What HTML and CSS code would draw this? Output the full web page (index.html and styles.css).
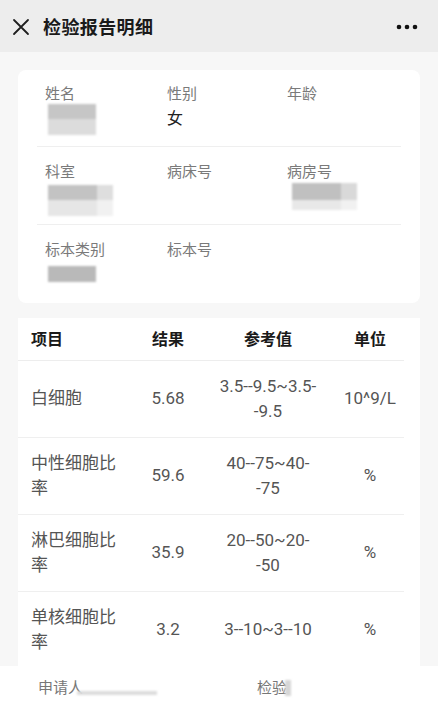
FILE: index.html
```html
<!DOCTYPE html>
<html lang="zh-CN">
<head>
<meta charset="utf-8">
<title>检验报告明细</title>
<link rel="stylesheet" href="styles.css">
</head>
<body>
<div class="page">
  <header class="topbar">
    <svg class="close-icon" width="18" height="18" viewBox="0 0 18 18"><path d="M2 2 L16 16 M16 2 L2 16" stroke="#1f1f1f" stroke-width="1.8" fill="none" stroke-linecap="round"/></svg>
    <h1 class="title">检验报告明细</h1>
    <svg class="more-icon" width="22" height="6" viewBox="0 0 22 6"><circle cx="3" cy="3" r="2.3" fill="#111"/><circle cx="11" cy="3" r="2.3" fill="#111"/><circle cx="19" cy="3" r="2.3" fill="#111"/></svg>
  </header>

  <main class="content">
    <section class="info-card">
      <div class="info-row">
        <div class="field"><div class="label">姓名</div><div class="value"><span class="blur blur-name"></span></div></div>
        <div class="field"><div class="label">性别</div><div class="value">女</div></div>
        <div class="field"><div class="label">年龄</div><div class="value"></div></div>
      </div>
      <div class="info-row">
        <div class="field"><div class="label">科室</div><div class="value"><span class="blur blur-dept"></span></div></div>
        <div class="field"><div class="label">病床号</div><div class="value"></div></div>
        <div class="field"><div class="label">病房号</div><div class="value"><span class="blur blur-ward"></span></div></div>
      </div>
      <div class="info-row">
        <div class="field"><div class="label">标本类别</div><div class="value"><span class="blur blur-type"></span></div></div>
        <div class="field"><div class="label">标本号</div><div class="value"></div></div>
        <div class="field"><div class="label"></div><div class="value"></div></div>
      </div>
    </section>

    <section class="result-card">
      <table class="result-table">
        <colgroup><col class="c-item"><col class="c-res"><col class="c-ref"><col class="c-unit"></colgroup>
        <thead>
          <tr><th class="t-item">项目</th><th>结果</th><th>参考值</th><th>单位</th></tr>
        </thead>
        <tbody>
          <tr><td class="t-item">白细胞</td><td>5.68</td><td>3.5--9.5~3.5-<br>-9.5</td><td>10^9/L</td></tr>
          <tr><td class="t-item">中性细胞比<br>率</td><td>59.6</td><td>40--75~40-<br>-75</td><td>%</td></tr>
          <tr><td class="t-item">淋巴细胞比<br>率</td><td>35.9</td><td>20--50~20-<br>-50</td><td>%</td></tr>
          <tr><td class="t-item">单核细胞比<br>率</td><td>3.2</td><td>3--10~3--10</td><td>%</td></tr>
        </tbody>
      </table>
    </section>
  </main>

  <footer class="bottom-bar">
    <div class="sign">申请人<span class="blur blur-applicant"></span></div>
    <div class="sign">检验<span class="blur blur-checker"></span></div>
  </footer>
</div>
</body>
</html>
```

FILE: styles.css
```css
* { box-sizing: border-box; }
html, body { margin: 0; padding: 0; }
body {
  font-family: Roboto, "Noto Sans CJK SC", "Noto Sans", sans-serif;
  background: #f7f7f7;
  color: #222;
}
.page {
  display: flex;
  flex-direction: column;
  height: 100vh;
  overflow: hidden;
}
.topbar {
  height: 52px;
  flex: none;
  background: #ededed;
  display: flex;
  align-items: center;
  padding: 0 20px 0 12px;
}
.close-icon { flex: none; margin-top: 1px; }
.title {
  margin: 0 0 0 13px;
  font-size: 18px;
  font-weight: 700;
  color: #1a1a1a;
  flex: 1;
  letter-spacing: 0.4px;
}
.more-icon { flex: none; margin-top: 1px; }

.content {
  flex: 1;
  overflow: hidden;
  padding: 18px 18px 0;
}
.info-card {
  background: #fff;
  border-radius: 8px;
  padding: 0 19px;
}
.info-row {
  display: grid;
  grid-template-columns: 122px 120px 1fr;
  padding: 12px 0 14px 8px;
  border-bottom: 1px solid #efefef;
}
.info-row + .info-row { padding-top: 13px; padding-bottom: 14px; }
.info-row:last-child { border-bottom: none; padding-bottom: 15px; }
.label {
  font-size: 15px;
  line-height: 24px;
  height: 24px;
  color: #7a7a7a;
}
.value {
  display: flow-root;
  font-size: 16px;
  line-height: 26px;
  height: 26px;
  color: #222;
}
.blur { display: block; filter: blur(1.3px); }
.blur-name {
  width: 48px; height: 31px; margin: -2px 0 0 3px;
  background: linear-gradient(#c6c6c6 0 48%, #dcdcdc 48% 100%);
}
.blur-dept {
  width: 65px; height: 31px; margin: 1px 0 0 3px;
  background:
    linear-gradient(90deg, transparent 0 75%, rgba(255,255,255,0.45) 75%),
    linear-gradient(#c3c3c3 0 48%, #e6e6e6 48% 100%);
}
.blur-ward {
  width: 65px; height: 27px; margin: -1px 0 0 5px;
  background:
    linear-gradient(90deg, transparent 0 75%, rgba(255,255,255,0.4) 75%),
    linear-gradient(#c0c0c0 0 62%, #e8e8e8 62% 100%);
}
.blur-type {
  width: 48px; height: 16px; margin: 4px 0 0 3px;
  background: #b9b9b9;
}

.result-card {
  margin-top: 15px;
  background: #fff;
  padding-right: 16px;
}
.result-table {
  width: 100%;
  border-collapse: collapse;
  table-layout: fixed;
}
.c-item { width: 118px; }
.c-res { width: 64px; }
.c-ref { width: 136px; }
.c-unit { width: 68px; }
.result-table th {
  font-size: 16px;
  font-weight: 700;
  color: #1a1a1a;
  height: 42px;
  padding: 0 0 2px;
  text-align: center;
  border-bottom: 1px solid #ededed;
}
.result-table td {
  font-size: 17px;
  line-height: 25px;
  color: #555;
  text-align: center;
  height: 77px;
  padding: 0;
  border-bottom: 1px solid #efefef;
}
.result-table .t-item { text-align: left; padding-left: 13px; }

.bottom-bar {
  flex: none;
  height: 35px;
  background: #fff;
  display: grid;
  grid-template-columns: 219px 1fr;
  padding-left: 38px;
  padding-top: 8px;
}
.sign {
  font-size: 15px;
  line-height: 22px;
  color: #777;
  display: flex;
  align-items: center;
}
.blur-applicant {
  width: 80px; height: 4px; margin: 10px 0 0 -6px;
  background: #dcdcdc;
}
.blur-checker {
  width: 6px; height: 16px; margin: 0 0 0 -2px;
  background: #d6d6d6;
}
```
